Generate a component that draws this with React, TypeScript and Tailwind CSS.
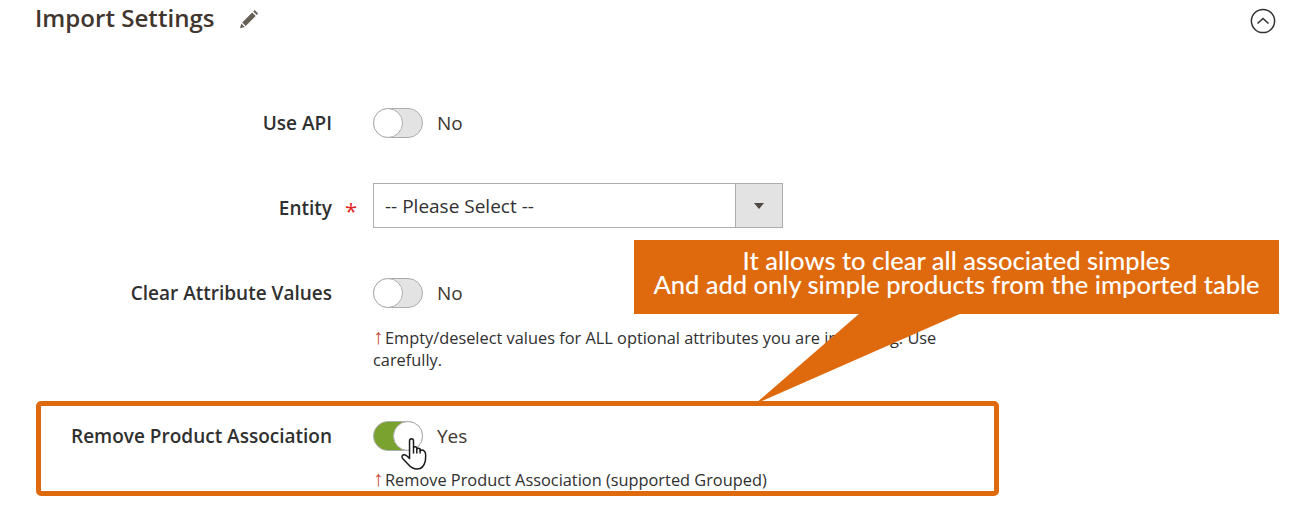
const labelClass = "w-[332px] shrink-0 text-right text-[19px] font-semibold text-[#303030]";
const noteClass = "text-[16.35px] leading-[22px] text-[#303030]";

function Toggle({ on }: { on?: boolean }) {
  return (
    <div
      className={
        on
          ? "flex h-[30px] w-[50px] justify-end rounded-full border border-[#adadad] bg-[#79a22e]"
          : "flex h-[30px] w-[50px] justify-start rounded-full border border-[#adadad] bg-[#e3e3e3]"
      }
    >
      <div className="-m-px h-[30px] w-[30px] rounded-full border border-[#adadad] bg-white" />
    </div>
  );
}

function Arrow() {
  return (
    <span className="inline-block w-[12px] font-['Liberation_Sans',sans-serif] text-[21px] leading-[0] font-light text-[#c8452a]">
      ↑
    </span>
  );
}

export default function App() {
  return (
    <div className="relative h-[505px] w-[1310px] overflow-hidden bg-white font-['Open_Sans',sans-serif]">
      <div className="flex h-[108px] items-start pl-[35px] pr-[34px]">
        <h2 className="-mt-px text-[24.1px] leading-[38px] font-semibold text-[#41362f]">Import Settings</h2>
        <svg viewBox="0 0 20 20" className="ml-[24px] mt-[9px] h-[20px] w-[20px] fill-[#676056]">
          <path d="M1 19.2 L2.3 14.4 L5.8 17.9 Z M3.2 13.4 L13.2 3.4 L16.7 6.9 L6.7 16.9 Z M14.2 2.4 L15.6 1 L19.1 4.5 L17.7 5.9 Z" />
        </svg>
        <svg viewBox="0 0 26 26" className="ml-auto mt-[8px] h-[26px] w-[26px] fill-none stroke-[#303030]">
          <circle cx="13" cy="13" r="11.6" strokeWidth="1.5" />
          <path d="M7.5 15.5 L13 10.5 L18.5 15.5" strokeWidth="1.6" />
        </svg>
      </div>

      <div className="flex h-[30px] items-center">
        <span className={labelClass}>Use API</span>
        <div className="ml-[41px] flex items-center gap-[14px]">
          <Toggle />
          <span className="text-[19px] text-[#41362f]">No</span>
        </div>
      </div>

      <div className="mt-[45px] flex items-start">
        <span className={`${labelClass} mt-[9px] leading-[32px]`}>Entity</span>
        <span className="ml-[13px] mt-[9px] w-[28px] text-[22px] leading-[36px] text-[#e22626]">*</span>
        <div className="flex h-[45px] w-[410px] border border-[#adadad]">
          <span className="flex-1 pl-[11px] text-[19px] leading-[44px] text-[#303030]">-- Please Select --</span>
          <div className="flex w-[47px] items-center justify-center border-l border-[#adadad] bg-[#e3e3e3]">
            <div className="h-0 w-0 border-x-[5.5px] border-t-[6px] border-x-transparent border-t-[#514943]" />
          </div>
        </div>
      </div>

      <div className="mt-[50px] flex h-[30px] items-center">
        <span className={labelClass}>Clear Attribute Values</span>
        <div className="ml-[41px] flex items-center gap-[14px]">
          <Toggle />
          <span className="pt-px text-[19px] text-[#41362f]">No</span>
        </div>
      </div>
      <p className={`${noteClass} ml-[373px] mt-[19px] w-[600px]`}>
        <Arrow />
        Empty/deselect values for ALL optional attributes you are importing. Use carefully.
      </p>

      <div className="mt-[50px] flex h-[30px] items-center">
        <span className={labelClass}>Remove Product Association</span>
        <div className="ml-[41px] flex items-center gap-[14px]">
          <Toggle on />
          <span className="text-[19px] text-[#41362f]">Yes</span>
        </div>
      </div>
      <p className={`${noteClass} ml-[373px] mt-[18px]`}>
        <Arrow />
        Remove Product Association (supported Grouped)
      </p>

      {/* annotation layer */}
      <div className="absolute left-[36px] top-[401px] h-[95px] w-[963px] rounded-[5px] border-[5px] border-[#df6a0e]" />
      <svg
        viewBox="120 140 80 100"
        className="absolute left-[400px] top-[437px] h-[33px] w-[27px] fill-white stroke-[#1a1a1a]"
        strokeWidth="4.5"
        strokeLinejoin="round"
      >
        <path d="M148 195 L148 152 Q148 145 154 145 Q160 145 160 152 L160 172 Q165 167 170 172 L170 176 Q175 172 180 176 L181 181 Q187 177 192 182 Q197 186 197 195 L196 212 Q190 237 172 237 Q155 237 143 222 L127 205 Q122 197 130 194 Q136 192 148 205 Z" />
        <path d="M160 172 L160 190 M170 174 L170 190 M180 178 L180 190" fill="none" />
      </svg>
      <svg viewBox="0 0 1310 505" className="absolute left-0 top-0 h-[505px] w-[1310px] fill-[#df6a0e]">
        <path d="M860 313 L962 313 L755 404 Z" />
      </svg>
      <div className="absolute left-[634px] top-[240px] flex h-[74px] w-[645px] flex-col items-center justify-center bg-[#df6a0e] pb-[10px] font-['Lato',sans-serif] text-[25.5px] leading-[24px] font-medium text-white">
        <span>It allows to clear all associated simples</span>
        <span>And add only simple products from the imported table</span>
      </div>
    </div>
  );
}
